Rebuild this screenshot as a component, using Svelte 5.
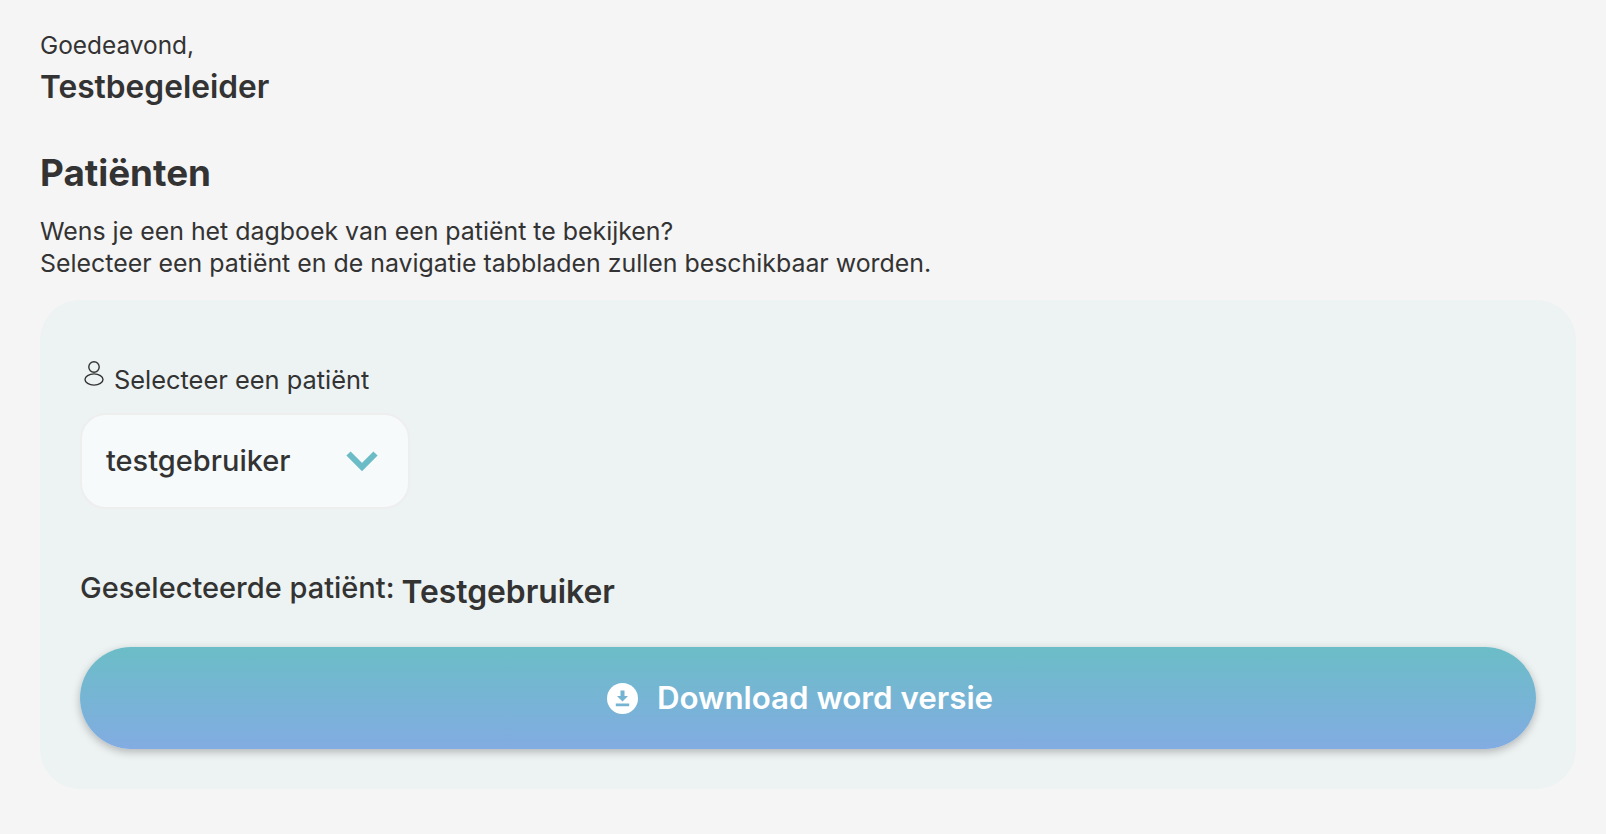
<script>
  let patient = 'testgebruiker';
</script>

<main class="page">
  <p class="greeting">Goedeavond,</p>
  <p class="name">Testbegeleider</p>

  <h2>Patiënten</h2>
  <p class="intro">
    Wens je een het dagboek van een patiënt te bekijken?<br />
    Selecteer een patiënt en de navigatie tabbladen zullen beschikbaar worden.
  </p>

  <section class="card">
    <div class="label">
      <svg width="22" height="28" viewBox="0 0 22 28" fill="none" stroke="#333" stroke-width="1.4">
        <circle cx="11" cy="7" r="5.2" />
        <ellipse cx="11" cy="19.5" rx="9" ry="5.6" />
      </svg>
      <span>Selecteer een patiënt</span>
    </div>

    <div class="select">
      <span>{patient}</span>
      <svg width="32" height="22" viewBox="0 0 32 22" fill="none" stroke="#6cbcc8" stroke-width="6">
        <path d="M2.500 3.500 16 17 29.500 3.500" />
      </svg>
    </div>

    <div class="selected">
      <span class="selected-label">Geselecteerde patiënt:</span>
      <span class="selected-name">Testgebruiker</span>
    </div>

    <button class="download">
      <svg width="31" height="31" viewBox="0 0 31 31">
        <circle cx="15.500" cy="15.500" r="15.500" fill="#fff" />
        <path d="M13.500 7.500h4v5.500h3.500l-5.500 5.500-5.500-5.500h3.500zM8.800 20.500h13.400v2.800H8.800z" fill="#74b4d2" />
      </svg>
      Download word versie
    </button>
  </section>
</main>

<style>
  :global(body) {
    background: #f5f5f5;
    color: #333;
    font-family: Inter, "Noto Sans", sans-serif;
  }

  .page {
    padding: 28px 30px 0 40px;
  }

  p {
    margin: 0;
  }

  .greeting {
    font-size: 24.400px;
    line-height: 34px;
  }

  .name {
    margin-top: 5px;
    font-size: 31.700px;
    line-height: 40px;
    font-weight: 600;
  }

  h2 {
    margin: 44px 0 0;
    font-size: 36.800px;
    line-height: 44px;
    font-weight: 700;
  }

  .intro {
    margin-top: 20px;
    font-size: 24.900px;
    line-height: 32px;
  }

  .card {
    margin-top: 21px;
    padding: 62px 40px 40px;
    background: #edf2f2;
    border-radius: 40px;
  }

  .label {
    display: flex;
    align-items: flex-end;
    gap: 9px;
    height: 36px;
    font-size: 25.400px;
    line-height: 36px;
  }

  .label svg {
    margin: 0 0 10px 3px;
  }

  .select {
    display: flex;
    align-items: center;
    justify-content: space-between;
    box-sizing: border-box;
    width: 330px;
    height: 96px;
    margin-top: 15px;
    padding: 0 30px 2px 24px;
    background: #f6fafb;
    border: 2px solid #eeeeee;
    border-radius: 26px;
    font-size: 29px;
    font-weight: 500;
  }

  .select svg {
    margin-top: 2px;
  }

  .selected {
    display: flex;
    align-items: flex-end;
    gap: 7px;
    margin-top: 60px;
  }

  .selected-label {
    font-size: 29px;
    font-weight: 500;
    line-height: 38px;
    margin-bottom: 6px;
  }

  .selected-name {
    font-size: 31.800px;
    font-weight: 600;
    line-height: 42px;
  }

  .download {
    display: flex;
    align-items: center;
    justify-content: center;
    gap: 19px;
    width: 100%;
    height: 102px;
    margin-top: 34px;
    padding: 0 16px 0 0;
    background: linear-gradient(180deg, #6bbdc7, #82ace2);
    border: 0;
    border-radius: 51px;
    box-shadow: 0 3px 8px rgba(0, 0, 0, 0.25);
    color: #fff;
    font-family: inherit;
    font-size: 31.300px;
    font-weight: 600;
  }
</style>
